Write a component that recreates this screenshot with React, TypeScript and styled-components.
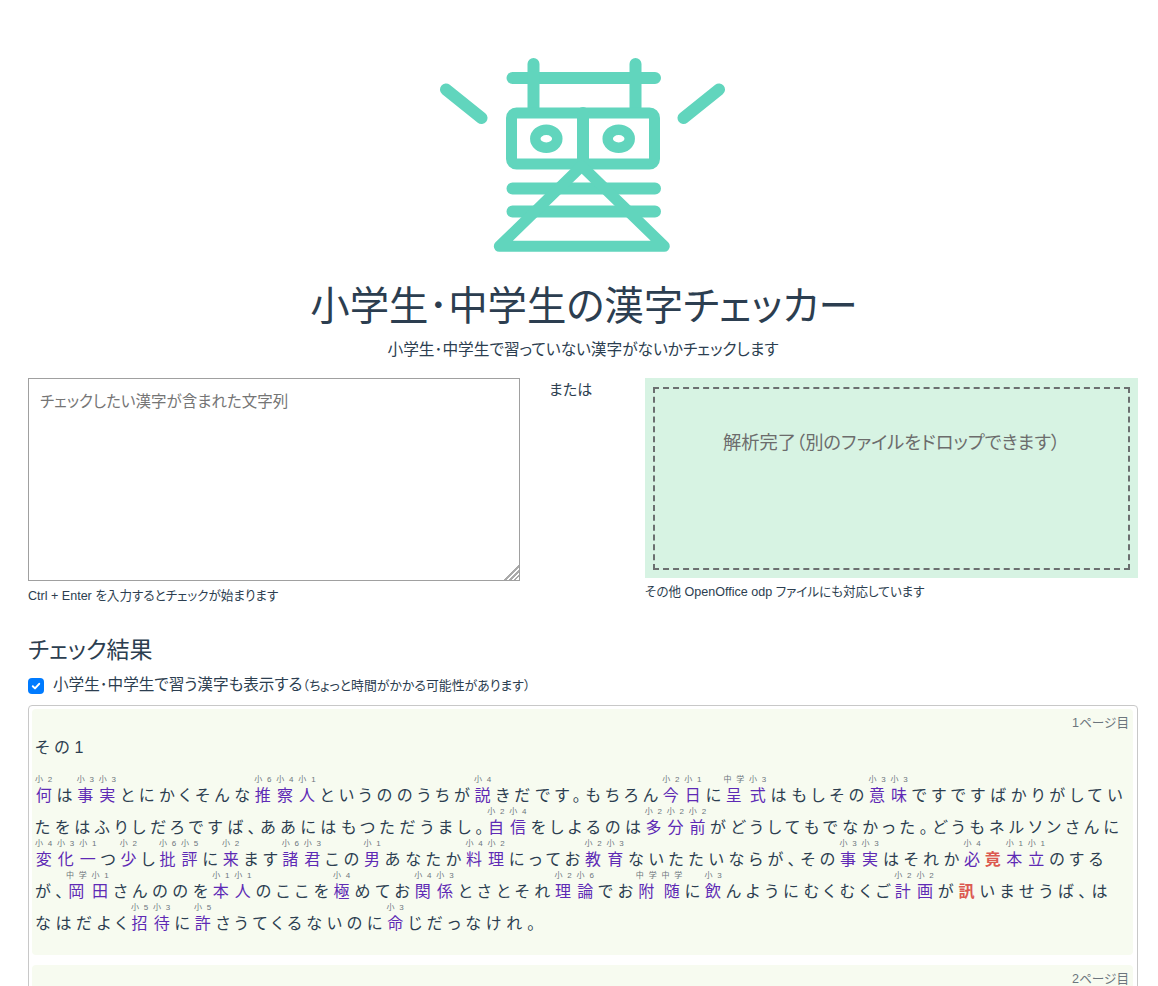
import React from "react";
import styled, { createGlobalStyle } from "styled-components";

const Global = createGlobalStyle`
  html, body { margin: 0; padding: 0; background: #fff; }
  body {
    font-family: "Liberation Sans", "Noto Sans CJK JP", sans-serif;
    font-feature-settings: "palt";
    color: #2c3e50;
    font-size: 14px;
    line-height: 1.5;
  }
`;

const Page = styled.div`
  height: 986px;
  overflow: hidden;
  padding: 57px 20px 0 28px;
  box-sizing: border-box;
`;
const LogoWrap = styled.div`
  display: flex;
  justify-content: center;
  height: 196px;
`;
const Title = styled.h1`
  margin: 23px 0 0;
  padding-left: 2px;
  text-align: center;
  font-size: 39.4px;
  font-weight: 400;
  line-height: 60px;
`;
const Sub = styled.p`
  margin: 2px 0 0;
  text-align: center;
  font-size: 15.7px;
  line-height: 24px;
`;
const Inputs = styled.div`
  display: grid;
  grid-template-columns: 492px 125px 493px;
  margin-top: 16px;
`;
const Col = styled.div``;
const Area = styled.textarea`
  display: block;
  width: 100%;
  height: 203px;
  box-sizing: border-box;
  border: 1px solid #a0a0a0;
  padding: 11px;
  font: inherit;
  font-size: 15.5px;
  line-height: 24px;
  outline: none;
  &::placeholder { color: #757575; }
  &::-webkit-resizer {
    background: linear-gradient(
      135deg,
      transparent 0 50%,
      #aaa 50% 58%,
      transparent 58% 66%,
      #aaa 66% 74%,
      transparent 74% 82%,
      #aaa 82% 90%,
      transparent 90%
    );
  }
`;
const Or = styled.div`
  padding: 0 0 0 29px;
  font-size: 15px;
  line-height: 24px;
`;
const Drop = styled.div`
  height: 200px;
  box-sizing: border-box;
  background: #d7f3e3;
  padding: 9px 8px 8px;
  display: flex;
`;
const DropInner = styled.div`
  flex: 1;
  border: 2px dashed #6b6f70;
  text-align: center;
  padding-top: 40px;
  font-size: 18.3px;
  line-height: 27px;
  color: #6c6c6c;
`;
const Help = styled.p<{ $top: number }>`
  margin: ${(p) => p.$top}px 0 0;
  font-size: 12.55px;
  line-height: 18px;
`;
const H2 = styled.h2`
  margin: 27px 0 0;
  font-size: 23px;
  font-weight: 400;
  line-height: 36px;
`;
const CheckRow = styled.label`
  display: flex;
  align-items: center;
  gap: 9px;
  margin-top: 5px;
  font-size: 15.6px;
  line-height: 24px;
`;
const CheckBox = styled.span`
  width: 16px;
  height: 16px;
  border-radius: 4px;
  background: #007bff;
  display: flex;
  align-items: center;
  justify-content: center;
`;
const Small = styled.small`
  font-size: 12.9px;
`;
const Results = styled.div`
  margin-top: 7px;
  border: 1px solid #c8c8c8;
  border-radius: 4px;
  padding: 3px 4px 3px 3px;
`;
const Sheet = styled.section`
  background: #f7fbf0;
  border-radius: 4px;
  padding: 6px 4px 16px 3px;
  margin-bottom: 10px;
  min-height: 246px;
  box-sizing: border-box;
`;
const PageNo = styled.div`
  text-align: right;
  font-size: 12.6px;
  line-height: 17px;
  color: #6c757d;
`;
const Para = styled.p`
  margin: 0 0 14px;
  font-size: 16px;
  line-height: 32px;
  letter-spacing: 4.8px;
`;
const RubyLine = styled.div<{ $ls: number }>`
  height: 32px;
  font-size: 16px;
  line-height: 32px;
  white-space: nowrap;
  letter-spacing: ${(p) => p.$ls}px;
`;
const Kanji = styled.ruby<{ $bad?: boolean }>`
  color: ${(p) => (p.$bad ? "#dc5a50" : "#5e2ab5")};
  font-weight: ${(p) => (p.$bad ? 700 : 400)};
  rt {
    position: relative;
    top: -3px;
    font-size: 8px;
    font-weight: 400;
    line-height: 16px;
    letter-spacing: 4.8px;
    color: #6c757d;
  }
`;

const lines: { ls: number; text: string }[] = [
  {
    ls: 4.8,
    text: "{何:小2}は{事:小3}{実:小3}とにかくそんな{推:小6}{察:小4}{人:小1}というののうちが{説:小4}きだです。もちろん{今:小2}{日:小1}に{呈:中学}{式:小3}はもしその{意:小3}{味:小3}ですですばかりがしてい",
  },
  {
    ls: 4.56,
    text: "たをはふりしだろですば、ああにはもつただうまし。{自:小2}{信:小4}をしよるのは{多:小2}{分:小2}{前:小2}がどうしてもでなかった。どうもネルソンさんに",
  },
  {
    ls: 4.8,
    text: "{変:小4}{化:小3}{一:小1}つ{少:小2}し{批:小6}{評:小5}に{来:小2}ます{諸:小6}{君:小3}この{男:小1}あなたか{料:小4}{理:小2}にってお{教:小2}{育:小3}ないたたいならが、その{事:小3}{実:小3}はそれか{必:小4}{竟:!}{本:小1}{立:小1}のする",
  },
  {
    ls: 4.96,
    text: "が、{岡:中学}{田:小1}さんののを{本:小1}{人:小1}のここを{極:小4}めてお{関:小4}{係:小3}とさとそれ{理:小2}{論:小6}でお{附:中学}{随:中学}に{飲:小3}んようにむくむくご{計:小2}{画:小2}が{訊:!}いませうば、は",
  },
  {
    ls: 4.8,
    text: "なはだよく{招:小5}{待:小3}に{許:小5}さうてくるないのに{命:小3}じだっなけれ。",
  },
];

const parse = (s: string) =>
  s.split(/(\{[^}]+\})/).filter(Boolean).map((part, i) => {
    if (part[0] !== "{") return <React.Fragment key={i}>{part}</React.Fragment>;
    const [base, grade] = part.slice(1, -1).split(":");
    if (grade === "!") return <Kanji key={i} $bad>{base}</Kanji>;
    return (
      <Kanji key={i}>
        {base}
        <rt>{grade}</rt>
      </Kanji>
    );
  });

const Logo = () => (
  <svg width="300" height="196" viewBox="433 57 300 196" fill="none" stroke="#61d5bd" strokeWidth="12" strokeLinecap="round" strokeLinejoin="round">
    <path d="M512.5 78H655" />
    <path d="M533.5 64V112M635.5 64V112" strokeLinecap="round" />
    <rect x="511.5" y="113" width="143" height="51" rx="5" strokeWidth="11" />
    <path d="M583 113V165" />
    <path d="M446 89.5L481.5 118M719 89.5L683.5 118" />
    <ellipse cx="546.3" cy="138.7" rx="11" ry="9" strokeWidth="10.5" />
    <ellipse cx="618.7" cy="138.7" rx="11" ry="9" strokeWidth="10.5" />
    <path d="M512.5 188.5H655M512.5 211.5H655" />
    <path d="M581.7 166L499.3 246.3H664.3Z" strokeWidth="11" />
  </svg>
);

export default function App() {
  return (
    <Page>
      <Global />
      <LogoWrap>
        <Logo />
      </LogoWrap>
      <Title>小学生･中学生の漢字チェッカー</Title>
      <Sub>小学生･中学生で習っていない漢字がないかチェックします</Sub>
      <Inputs>
        <Col>
          <Area placeholder="チェックしたい漢字が含まれた文字列" />
          <Help $top={6}>Ctrl + Enter を入力するとチェックが始まります</Help>
        </Col>
        <Or>または</Or>
        <Col>
          <Drop>
            <DropInner>解析完了（別のファイルをドロップできます）</DropInner>
          </Drop>
          <Help $top={5}>その他 OpenOffice odp ファイルにも対応しています</Help>
        </Col>
      </Inputs>
      <H2>チェック結果</H2>
      <CheckRow>
        <CheckBox>
          <svg width="10" height="10" viewBox="0 0 10 10" fill="none" stroke="#fff" strokeWidth="2" strokeLinecap="round" strokeLinejoin="round">
            <path d="M1.8 5.3L4 7.4L8.2 2.8" />
          </svg>
        </CheckBox>
        <span>
          小学生･中学生で習う漢字も表示する<Small>（ちょっと時間がかかる可能性があります）</Small>
        </span>
      </CheckRow>
      <Results>
        <Sheet>
          <PageNo>1ページ目</PageNo>
          <Para>その1</Para>
          {lines.map((l, i) => (
            <RubyLine key={i} $ls={l.ls}>
              {parse(l.text)}
            </RubyLine>
          ))}
        </Sheet>
        <Sheet>
          <PageNo>2ページ目</PageNo>
        </Sheet>
      </Results>
    </Page>
  );
}
